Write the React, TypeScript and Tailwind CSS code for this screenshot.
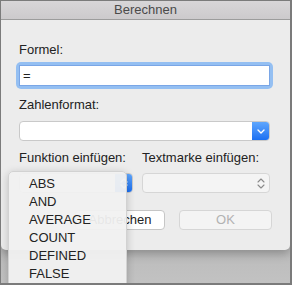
export default function App() {
  const functions = ["ABS", "AND", "AVERAGE", "COUNT", "DEFINED", "FALSE"];

  return (
    <div
      className="relative flex h-[285px] w-[292px] flex-col overflow-hidden border-l border-t border-r-2 border-b-2 border-[#7b7b7b] bg-gradient-to-b from-[#8c8c8c] to-[#c2c2c2] text-[13px] text-[#222]"
      style={{ fontFamily: '"Liberation Sans", Arial, sans-serif' }}
    >
      {/* Dialogfenster */}
      <div className="flex flex-col rounded-b-[5px] bg-[#ececec] shadow-[0_4px_10px_rgba(0,0,0,0.25)]">
        <div className="flex h-[19px] items-center justify-center border-b border-[#9c9c9c] bg-gradient-to-b from-[#d8d6d8] to-[#cccacc] leading-[18px] text-[#4a4a4a]">
          Berechnen
        </div>

        <div className="flex flex-col px-[18px] pb-[20px] pt-[22px]">
          <div className="leading-4">Formel:</div>
          <div className="-ml-[3px] mt-[4px] w-[257px] rounded-[5px] bg-[#94bff2] p-[3px]">
            <div className="flex h-[21px] items-center border border-[#7aa6e6] bg-white pl-[3px] leading-4">=</div>
          </div>

          <div className="mt-[8px] leading-4">Zahlenformat:</div>
          <div className="mt-[8px] flex h-[20px] w-[251px] overflow-hidden rounded-[4px] border border-[#c9c9c9] bg-white">
            <div className="flex-1" />
            <div className="flex w-[17px] items-center justify-center bg-gradient-to-b from-[#5ea6fd] to-[#1a6ff2]">
              <svg width="8" height="5" viewBox="0 0 8 5" fill="none" stroke="white" strokeWidth="1.4">
                <path d="M1 1l3 3 3-3" strokeLinecap="round" strokeLinejoin="round" />
              </svg>
            </div>
          </div>

          <div className="mt-[9px] flex leading-4">
            <span className="w-[123px]">Funktion einfügen:</span>
            <span>Textmarke einfügen:</span>
          </div>
          <div className="mt-[7px] flex h-[20px] gap-[9px]">
            <div className="flex w-[114px] overflow-hidden rounded-[4px] border border-[#c9c9c9] bg-white">
              <div className="flex-1" />
              <div className="flex w-[17px] items-center justify-center bg-gradient-to-b from-[#5ea6fd] to-[#1a6ff2]">
                <svg width="8" height="11" viewBox="0 0 8 11" fill="none" stroke="white" strokeWidth="1.3">
                  <path d="M1 4l3-3 3 3M1 7l3 3 3-3" strokeLinecap="round" strokeLinejoin="round" />
                </svg>
              </div>
            </div>
            <div className="flex w-[128px] items-center justify-end rounded-[4px] border border-[#d6d6d6] bg-[#f4f4f4] pr-[4px]">
              <svg width="8" height="13" viewBox="0 0 8 13" fill="none" stroke="#8a8a8a" strokeWidth="1.1">
                <path d="M1 5l3-3 3 3M1 8l3 3 3-3" strokeLinecap="round" strokeLinejoin="round" />
              </svg>
            </div>
          </div>

          <div className="mt-[17px] flex h-[20px] justify-end gap-[14px]">
            <button className="w-[90px] rounded-[4px] border border-[#c6c6c6] bg-white leading-4 text-[#222]">
              Abbrechen
            </button>
            <button className="w-[93px] rounded-[4px] border border-[#d6d6d6] bg-[#f4f4f4] leading-4 text-[#b2b2b2]">
              OK
            </button>
          </div>
        </div>
      </div>

      {/* Aufgeklappte Funktionsliste */}
      <div className="absolute left-[7px] top-[170px] h-[130px] w-[119px] rounded-[5px] border border-[#d2d2d2] bg-[#f1f1f1]/95 pt-[3px] shadow-[0_2px_8px_rgba(0,0,0,0.2)]">
        {functions.map((f) => (
          <div key={f} className="flex h-[18px] items-center pl-[20px] leading-4">
            {f}
          </div>
        ))}
      </div>
    </div>
  );
}
